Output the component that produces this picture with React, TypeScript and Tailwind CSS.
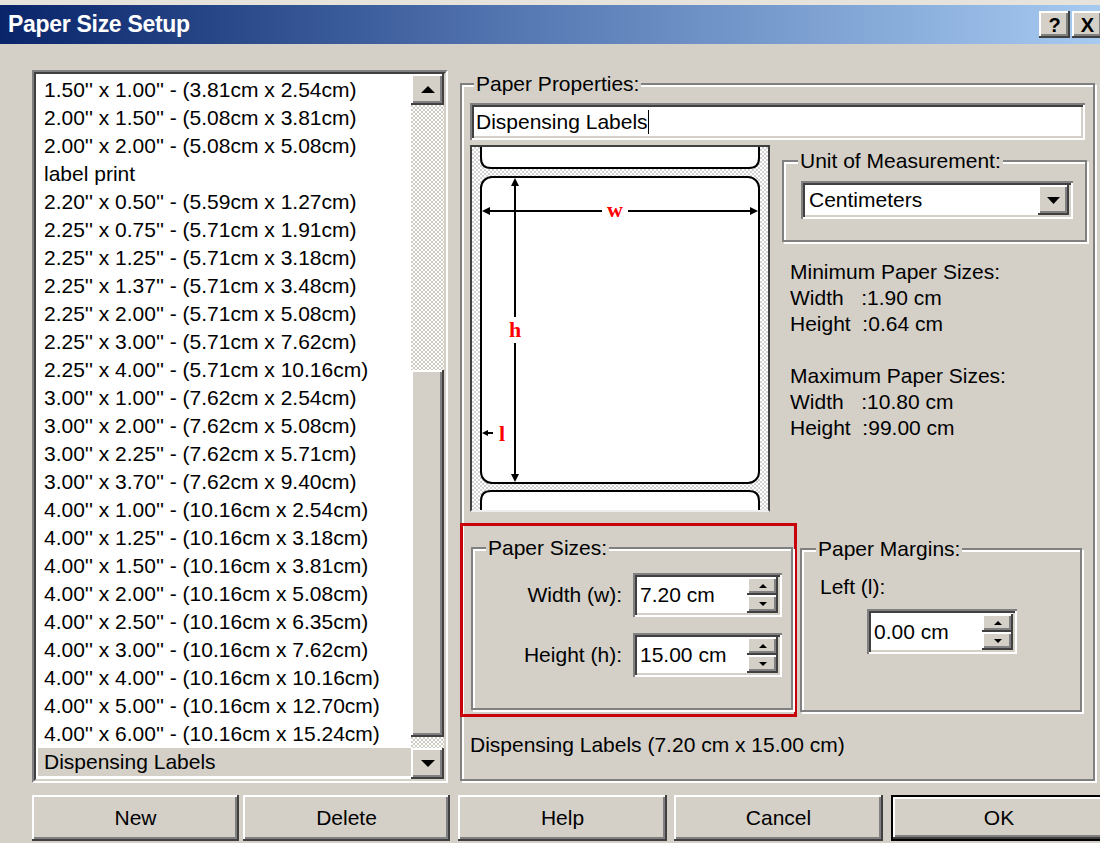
import type { ReactNode } from "react";

// Classic 3D bevels, drawn with inset shadows.
const raised =
  "bg-[#d4d0c8] shadow-[inset_-2px_-2px_#404040,inset_2px_2px_#ffffff,inset_-4px_-4px_#808080]";
const sunken =
  "bg-white shadow-[inset_2px_2px_#808080,inset_-2px_-2px_#ffffff,inset_4px_4px_#404040,inset_-4px_-4px_#d4d0c8]";
const dither =
  "bg-[repeating-conic-gradient(#ffffff_0%_25%,#cfccc4_0%_50%)] bg-size-[4px_4px]";

const sizes = [
  "1.50'' x 1.00'' - (3.81cm x 2.54cm)",
  "2.00'' x 1.50'' - (5.08cm x 3.81cm)",
  "2.00'' x 2.00'' - (5.08cm x 5.08cm)",
  "label print",
  "2.20'' x 0.50'' - (5.59cm x 1.27cm)",
  "2.25'' x 0.75'' - (5.71cm x 1.91cm)",
  "2.25'' x 1.25'' - (5.71cm x 3.18cm)",
  "2.25'' x 1.37'' - (5.71cm x 3.48cm)",
  "2.25'' x 2.00'' - (5.71cm x 5.08cm)",
  "2.25'' x 3.00'' - (5.71cm x 7.62cm)",
  "2.25'' x 4.00'' - (5.71cm x 10.16cm)",
  "3.00'' x 1.00'' - (7.62cm x 2.54cm)",
  "3.00'' x 2.00'' - (7.62cm x 5.08cm)",
  "3.00'' x 2.25'' - (7.62cm x 5.71cm)",
  "3.00'' x 3.70'' - (7.62cm x 9.40cm)",
  "4.00'' x 1.00'' - (10.16cm x 2.54cm)",
  "4.00'' x 1.25'' - (10.16cm x 3.18cm)",
  "4.00'' x 1.50'' - (10.16cm x 3.81cm)",
  "4.00'' x 2.00'' - (10.16cm x 5.08cm)",
  "4.00'' x 2.50'' - (10.16cm x 6.35cm)",
  "4.00'' x 3.00'' - (10.16cm x 7.62cm)",
  "4.00'' x 4.00'' - (10.16cm x 10.16cm)",
  "4.00'' x 5.00'' - (10.16cm x 12.70cm)",
  "4.00'' x 6.00'' - (10.16cm x 15.24cm)",
  "Dispensing Labels",
  "label label label",
];
const selected = "Dispensing Labels";

function Tri({ down, w = 14, h = 7 }: { down?: boolean; w?: number; h?: number }) {
  const points = down ? `0,0 ${w},0 ${w / 2},${h}` : `0,${h} ${w},${h} ${w / 2},0`;
  return (
    <svg width={w} height={h} viewBox={`0 0 ${w} ${h}`}>
      <polygon points={points} fill="#000" />
    </svg>
  );
}

function Group({
  label,
  legendClass,
  className,
  children,
}: {
  label: string;
  legendClass: string;
  className: string;
  children?: ReactNode;
}) {
  return (
    <div
      className={`relative border-2 border-[#808080] shadow-[inset_2px_2px_#ffffff,2px_2px_#ffffff] ${className}`}
    >
      <span
        className={`absolute -top-[13px] bg-[#d4d0c8] px-[2px] leading-[24px] ${legendClass}`}
      >
        {label}
      </span>
      {children}
    </div>
  );
}

function SpinBox({ value, className }: { value: string; className: string }) {
  return (
    <div className={`flex items-center ${sunken} ${className}`}>
      <span className="flex-1 pl-[7px] leading-[26px]">{value}</span>
      <div className="mr-[4px] flex w-[31px] flex-col">
        <div className={`flex h-[18px] items-center justify-center ${raised}`}>
          <Tri w={8} h={4} />
        </div>
        <div className={`flex h-[18px] items-center justify-center ${raised}`}>
          <Tri down w={8} h={4} />
        </div>
      </div>
    </div>
  );
}

function Button({ label, className }: { label: string; className: string }) {
  return (
    <div className={`flex h-[46px] shrink-0 items-center justify-center ${raised} ${className}`}>
      {label}
    </div>
  );
}

function LabelPreview() {
  return (
    <svg width="296" height="363" viewBox="0 0 296 363">
      <defs>
        <pattern id="web" width="4" height="4" patternUnits="userSpaceOnUse">
          <rect width="4" height="4" fill="#d2d2d2" />
          <rect width="2" height="2" fill="#ffffff" />
          <rect x="2" y="2" width="2" height="2" fill="#ffffff" />
        </pattern>
      </defs>
      <rect width="296" height="363" fill="url(#web)" />
      <path
        d="M9 -4 V11 Q9 21 19 21 H277 Q287 21 287 11 V-4"
        fill="#fff"
        stroke="#000"
        strokeWidth="2"
      />
      <rect x="9" y="30" width="278" height="306" rx="11" fill="#fff" stroke="#000" strokeWidth="2" />
      <path
        d="M9 370 V354 Q9 344 19 344 H277 Q287 344 287 354 V370"
        fill="#fff"
        stroke="#000"
        strokeWidth="2"
      />
      {/* width */}
      <g stroke="#000" strokeWidth="2">
        <line x1="12" y1="64" x2="130" y2="64" />
        <line x1="156" y1="64" x2="284" y2="64" />
        {/* height */}
        <line x1="43" y1="33" x2="43" y2="170" />
        <line x1="43" y1="196" x2="43" y2="333" />
        {/* left margin */}
        <line x1="12" y1="286" x2="21" y2="286" />
      </g>
      <g fill="#000">
        <polygon points="10,64 18,60 18,68" />
        <polygon points="286,64 278,60 278,68" />
        <polygon points="43,31 39,39 47,39" />
        <polygon points="43,335 39,327 47,327" />
        <polygon points="10,286 16,283 16,289" />
      </g>
      <g
        fill="#ff0000"
        fontFamily="'Liberation Serif', 'DejaVu Serif', serif"
        fontWeight="bold"
        fontSize="22"
        textAnchor="middle"
      >
        <text x="143" y="70">w</text>
        <text x="43" y="190">h</text>
        <text x="30" y="294">l</text>
      </g>
    </svg>
  );
}

export default function App() {
  return (
    <div className="flex h-[843px] w-[1100px] flex-col overflow-hidden bg-[#d4d0c8] font-['Liberation_Sans',Arial,sans-serif] text-[21px] text-black">
      <div className="h-[5px] shrink-0 bg-[#e6e3dc]" />
      {/* title bar */}
      <div className="flex h-[39px] shrink-0 items-center bg-linear-to-r from-[#0a246a] via-[#5a7cb6] to-[#a6caf0] pl-[8px]">
        <span className="text-[23px] font-bold tracking-[-0.3px] text-white">Paper Size Setup</span>
        <div className="-mr-[3px] ml-auto flex gap-[2px]">
          <div className={`flex h-[27px] w-[31px] items-center justify-center text-[20px] font-bold ${raised}`}>
            ?
          </div>
          <div className={`flex h-[27px] w-[31px] items-center justify-center text-[20px] font-bold ${raised}`}>
            X
          </div>
        </div>
      </div>

      <div className="flex shrink-0 pt-[26px]">
        {/* sizes list */}
        <div className="ml-[32px] h-[713px] w-[416px] border-2 border-t-[#808080] border-r-white border-b-white border-l-[#808080]">
          <div className="flex h-full border-2 border-t-[#404040] border-r-[#d4d0c8] border-b-[#d4d0c8] border-l-[#404040] bg-white">
            <div className="flex-1 overflow-hidden pt-[2px] pl-[2px]">
              {sizes.map((s) => (
                <div
                  key={s}
                  className={`h-[28px] pl-[6px] leading-[28px] whitespace-nowrap ${
                    s === selected ? "bg-[#d4d0c8]" : ""
                  }`}
                >
                  {s}
                </div>
              ))}
            </div>
            <div className="flex w-[33px] flex-col">
              <div className={`flex h-[31px] shrink-0 items-center justify-center ${raised}`}>
                <Tri />
              </div>
              <div className={`flex flex-1 flex-col ${dither}`}>
                <div className="h-[265px]" />
                <div className={`h-[367px] ${raised}`} />
              </div>
              <div className={`flex h-[31px] shrink-0 items-center justify-center ${raised}`}>
                <Tri down />
              </div>
            </div>
          </div>
        </div>

        {/* paper properties */}
        <Group
          label="Paper Properties:"
          legendClass="left-[12px]"
          className="mt-[13px] ml-[12px] flex h-[698px] w-[635px] flex-col pt-[18px] pr-[6px] pl-[8px]"
        >
          <div className={`flex h-[37px] w-[615px] items-center pl-[6px] ${sunken}`}>
            <span>Dispensing Labels</span>
            <span className="h-[24px] w-px bg-black" />
          </div>

          <div className="mt-[5px] flex">
            <div className="h-[367px] w-[300px] border-2 border-t-[#404040] border-r-[#404040] border-b-[#eeeeee] border-l-[#404040]">
              <LabelPreview />
            </div>
            <div className="ml-[12px] flex w-[305px] flex-col pt-[15px]">
              <Group
                label="Unit of Measurement:"
                legendClass="left-[14px]"
                className="h-[82px] pt-[19px] pl-[17px]"
              >
                <div className={`flex h-[38px] w-[272px] items-center pl-[8px] ${sunken}`}>
                  <span className="flex-1">Centimeters</span>
                  <div className={`mr-[4px] flex h-[30px] w-[31px] items-center justify-center ${raised}`}>
                    <Tri down w={13} h={7} />
                  </div>
                </div>
              </Group>
              <div className="mt-[17px] pl-[8px] leading-[26px] whitespace-pre">
                <div>Minimum Paper Sizes:</div>
                <div>Width   :1.90 cm</div>
                <div>Height  :0.64 cm</div>
                <div className="h-[26px]" />
                <div>Maximum Paper Sizes:</div>
                <div>Width   :10.80 cm</div>
                <div>Height  :99.00 cm</div>
              </div>
            </div>
          </div>

          <div className="mt-[11px] flex">
            <div className="-ml-[10px] h-[194px] w-[337px] border-[3px] border-[#c8000a] pt-[21px] pr-[1px] pb-[4px] pl-[8px]">
              <Group
                label="Paper Sizes:"
                legendClass="left-[13px]"
                className="h-full pt-[24px]"
              >
                <div className="flex items-center">
                  <span className="w-[149px] text-right">Width (w):</span>
                  <SpinBox value="7.20 cm" className="ml-[11px] h-[44px] w-[149px]" />
                </div>
                <div className="mt-[16px] flex items-center">
                  <span className="w-[149px] text-right">Height (h):</span>
                  <SpinBox value="15.00 cm" className="ml-[11px] h-[44px] w-[149px]" />
                </div>
              </Group>
            </div>
            <Group
              label="Paper Margins:"
              legendClass="left-[14px]"
              className="mt-[25px] ml-[3px] h-[164px] w-[282px] pt-[24px] pl-[18px]"
            >
              <div className="leading-[26px]">Left (l):</div>
              <SpinBox value="0.00 cm" className="mt-[9px] ml-[47px] h-[45px] w-[150px]" />
            </Group>
          </div>

          <div className="mt-[15px] leading-[26px]">Dispensing Labels (7.20 cm x 15.00 cm)</div>
        </Group>
      </div>

      {/* dialog buttons */}
      <div className="mt-[12px] flex shrink-0 pl-[32px]">
        <Button label="New" className="w-[207px]" />
        <Button label="Delete" className="ml-[4px] w-[207px]" />
        <Button label="Help" className="ml-[8px] w-[209px]" />
        <Button label="Cancel" className="ml-[7px] w-[209px]" />
        <div className="ml-[8px] h-[46px] w-[216px] shrink-0 border-2 border-black">
          <Button label="OK" className="h-full w-full" />
        </div>
      </div>
    </div>
  );
}
